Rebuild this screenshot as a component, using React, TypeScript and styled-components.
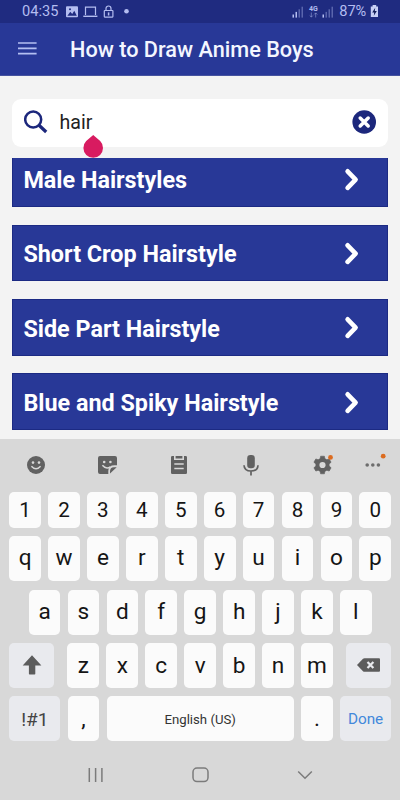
import React from "react";
import styled, { createGlobalStyle } from "styled-components";

const GlobalStyle = createGlobalStyle`
  * { box-sizing: border-box; }
  body { margin: 0; background: #f3f3f3; font-family: Roboto, "Liberation Sans", sans-serif; }
  svg { display: block; flex: none; }
`;

const Screen = styled.div`
  width: 400px;
  height: 800px;
  display: flex;
  flex-direction: column;
  overflow: hidden;
  background: #f3f3f3;
`;

const StatusBar = styled.div`
  height: 23px;
  flex: none;
  display: flex;
  align-items: center;
  justify-content: space-between;
  padding: 0 21px 0 22px;
  background: #1f2b80;
  color: #b4bdf0;
  font-size: 14.6px;
  line-height: 23px;
`;

const StatusGroup = styled.div`
  display: flex;
  align-items: center;
  height: 23px;
`;

const StatusText = styled.span<{ $width: number; $indent?: number }>`
  width: ${(p) => p.$width}px;
  padding-left: ${(p) => p.$indent ?? 0}px;
  white-space: nowrap;
`;

const NetworkType = styled.div`
  display: flex;
  flex-direction: column;
  align-items: center;
  width: 10px;
  margin: 0 4px 0 4px;
  font-size: 7px;
  line-height: 6px;
  font-weight: 700;
`;

const AppBar = styled.header`
  height: 52.5px;
  flex: none;
  display: flex;
  align-items: center;
  padding: 0 18px;
  background: #283897;
  border-bottom: 1px solid #46539f;
`;

const MenuButton = styled.div`
  width: 52px;
  padding-bottom: 1px;
`;

const Title = styled.h1`
  margin: 0;
  padding-top: 2px;
  font-size: 21.7px;
  font-weight: 500;
  line-height: 50px;
  color: #f3f6ff;
  white-space: nowrap;
`;

const Main = styled.main`
  flex: none;
  height: 363px;
  padding: 23px 12px 0;
  overflow: hidden;
`;

const SearchBox = styled.div`
  position: relative;
  display: flex;
  align-items: center;
  height: 48px;
  padding: 0 12px 1.6px;
  border-radius: 9px;
  background: #fff;
`;

const Query = styled.span`
  flex: 1;
  padding-left: 11.5px;
  font-size: 19.6px;
  font-weight: 400;
  line-height: 44px;
  padding-top: 3px;
  color: #222;
`;

const CursorHandle = styled.svg`
  position: absolute;
  left: 71px;
  top: 36.6px;
`;

const ListViewport = styled.div`
  margin-top: 11.2px;
  overflow: hidden;
`;

const List = styled.div`
  margin-top: -7.3px;
  display: grid;
  row-gap: 17.7px;
`;

const ListRow = styled.div`
  height: 56.6px;
  display: flex;
  align-items: center;
  justify-content: space-between;
  padding: 0 25.7px 0 10.4px;
  background: #283897;
  border: 1px solid #1c2a83;
  color: #fff;
  font-size: 23.35px;
  font-weight: 700;
  white-space: nowrap;
`;

const RowLabel = styled.span`
  padding-top: 3px;
  line-height: 28px;
`;

const Keyboard = styled.section`
  flex: 1;
  display: flex;
  flex-direction: column;
  background: #d8d8d8;
`;

const Toolbar = styled.div`
  height: 53.5px;
  flex: none;
  display: grid;
  grid-template-columns: repeat(5, 71.7px) 33.5px;
  align-items: center;
  justify-items: center;
`;

const Tool = styled.div`
  display: flex;
`;

const KeyRows = styled.div`
  display: grid;
  row-gap: 8.4px;
  padding: 0 8.8px 0 9.2px;
`;

const KeyRow = styled.div<{ $columns: string; $inset?: number; $short?: boolean }>`
  display: grid;
  grid-template-columns: ${(p) => p.$columns};
  column-gap: 7.2px;
  height: ${(p) => (p.$short ? 35.8 : 45)}px;
  padding: 0 ${(p) => p.$inset ?? 0}px;
`;

const LetterGroup = styled.div`
  display: grid;
  grid-template-columns: repeat(7, 1fr);
  column-gap: 7.2px;
  margin: 0 5.8px;
`;

const Key = styled.div<{ $size?: number; $special?: boolean; $color?: string; $shift?: number }>`
  display: flex;
  align-items: center;
  justify-content: center;
  border-radius: 5px;
  background: ${(p) => (p.$special ? "#e9eaee" : "#fbfbfb")};
  color: ${(p) => p.$color ?? "#151515"};
  font-size: ${(p) => p.$size ?? 22.6}px;
  line-height: 1;
  padding-top: ${(p) => p.$shift ?? 0}px;
  white-space: nowrap;
  min-width: 0;
`;

const NavBar = styled.nav`
  display: grid;
  grid-template-columns: repeat(3, 104.3px);
  justify-content: center;
  justify-items: center;
  align-items: center;
  height: 58px;
  padding: 10px 0 0 1px;
`;

const Signal = ({ lit }: { lit: number }) => (
  <svg width="12" height="12" viewBox="0 0 12 12">
    {[0, 1, 2, 3].map((i) => (
      <rect key={i} x={0.5 + i * 3} y={8.5 - i * 2.6} width="1.5" height={3.1 + i * 2.6} fill="#b4bdf0" opacity={i < lit ? 1 : 0.4} />
    ))}
  </svg>
);

const Chevron = () => (
  <svg width="18" height="26" viewBox="0 0 18 26">
    <path d="M4.6 5.3L12.6 13.6L4.6 21.9" fill="none" stroke="#fff" strokeWidth="4.6" strokeLinecap="round" strokeLinejoin="round" />
  </svg>
);

const styles = ["Male Hairstyles", "Short Crop Hairstyle", "Side Part Hairstyle", "Blue and Spiky Hairstyle"];

export default function App() {
  return (
    <Screen>
      <GlobalStyle />
      <StatusBar>
        <StatusGroup>
          <StatusText $width={44}>04:35</StatusText>
          <svg width="66" height="14" viewBox="0 0 66 14">
            <rect x="0" y="1.3" width="12" height="11" rx="1" fill="#b4bdf0" />
            <path d="M1.4 10.8 L4.3 6.8 L6.2 9 L8.3 5.8 L10.8 10.8Z" fill="#1f2b80" />
            <circle cx="4" cy="4.3" r="1" fill="#1f2b80" />
            <path d="M19.5 10 V2.2 H29.5 V10" fill="none" stroke="#b4bdf0" strokeWidth="1.2" />
            <path d="M17.3 11.3 H31.4" stroke="#b4bdf0" strokeWidth="1.4" />
            <path d="M40 5.5 V3.5 A2.5 2.5 0 0 1 45 3.5 V5.5" fill="none" stroke="#b4bdf0" strokeWidth="1.2" />
            <rect x="38.3" y="5.5" width="8.6" height="6.6" rx=".5" fill="none" stroke="#b4bdf0" strokeWidth="1.2" />
            <path d="M42.6 7.4 V10.5" stroke="#b4bdf0" strokeWidth="1.5" />
            <circle cx="60.5" cy="6.3" r="2.3" fill="#b4bdf0" />
          </svg>
        </StatusGroup>
        <StatusGroup>
          <Signal lit={2} />
          <NetworkType>
            <span>4G</span>
            <svg width="9" height="6" viewBox="0 0 9 6">
              <path d="M2.3 .5V5M.7 3.5L2.3 5.1L3.9 3.5M6.7 5.5V1M5.1 2.5L6.7 .9L8.3 2.5" fill="none" stroke="#b4bdf0" strokeWidth=".9" opacity=".55" />
            </svg>
          </NetworkType>
          <Signal lit={1} />
          <StatusText $width={35.6} $indent={4.8}>87%</StatusText>
          <svg width="9" height="13" viewBox="0 0 9 13">
            <path d="M2.6 0H6.2V1.4H8V12H.8V1.4H2.6Z" fill="#c8d0f6" />
            <path d="M5.2 2.8L2.2 7.4H4.2L3.8 10.8L6.8 6.1H4.8Z" fill="#111c58" />
          </svg>
        </StatusGroup>
      </StatusBar>
      <AppBar>
        <MenuButton>
          <svg width="19" height="13" viewBox="0 0 19 13">
            <path d="M0 1H18.6M0 6.4H18.6M0 11.7H18.6" stroke="#b4bff2" strokeWidth="1.7" />
          </svg>
        </MenuButton>
        <Title>How to Draw Anime Boys</Title>
      </AppBar>
      <Main>
        <SearchBox>
          <svg width="24" height="24" viewBox="0 0 24 24">
            <circle cx="9.2" cy="9.5" r="8" fill="none" stroke="#1c277c" strokeWidth="2.5" />
            <path d="M15 15.3L22.2 22" stroke="#1c277c" strokeWidth="3.3" />
          </svg>
          <Query>hair</Query>
          <svg width="24" height="24" viewBox="0 0 24 24">
            <circle cx="12.2" cy="12" r="11.8" fill="#1c277c" />
            <path d="M8.2 8L16.2 16M16.2 8L8.2 16" stroke="#fff" strokeWidth="3.5" strokeLinecap="round" />
          </svg>
          <CursorHandle width="21" height="23" viewBox="0 0 21 23">
            <path d="M10.2 0L17.2 6.1A9.8 9.8 0 1 1 3.2 6.1Z" fill="#d81b60" />
          </CursorHandle>
        </SearchBox>
        <ListViewport>
          <List>
            {styles.map((s) => (
              <ListRow key={s}>
                <RowLabel>{s}</RowLabel>
                <Chevron />
              </ListRow>
            ))}
          </List>
        </ListViewport>
      </Main>
      <Keyboard>
        <Toolbar>
          <Tool>
            <svg width="18" height="18" viewBox="0 0 18 18">
              <circle cx="9" cy="9" r="9" fill="#616161" />
              <circle cx="6" cy="6.6" r="1.3" fill="#d8d8d8" />
              <circle cx="12" cy="6.6" r="1.3" fill="#d8d8d8" />
              <path d="M4.4 10.3Q9 15.3 13.6 10.3" fill="none" stroke="#d8d8d8" strokeWidth="1.5" />
            </svg>
          </Tool>
          <Tool>
            <svg width="19" height="18" viewBox="0 0 19 18">
              <path d="M2 0H17Q19 0 19 2V9.3H16.5Q10.3 9.3 10.3 15V18H2Q0 18 0 16V2Q0 0 2 0Z" fill="#616161" />
              <path d="M12 17.6V15.5Q12 11.2 16 11.2H18.7Z" fill="#616161" />
              <circle cx="6.2" cy="6" r="1.3" fill="#d8d8d8" />
              <circle cx="12.4" cy="6" r="1.3" fill="#d8d8d8" />
              <path d="M4.4 9.3Q8.2 13.8 12.3 10.8" fill="none" stroke="#d8d8d8" strokeWidth="1.5" />
            </svg>
          </Tool>
          <Tool>
            <svg width="16" height="18" viewBox="0 0 16 18">
              <path d="M1.3 0H3V4H13V0H14.7Q16 0 16 1.3V16.7Q16 18 14.7 18H1.3Q0 18 0 16.7V1.3Q0 0 1.3 0Z" fill="#616161" />
              <rect x="4.6" y="0" width="6.8" height="2.5" fill="#616161" />
              <path d="M3.3 8H12.7M3.3 12.5H12.7" stroke="#d8d8d8" strokeWidth="1.6" />
            </svg>
          </Tool>
          <Tool>
            <svg width="16" height="21" viewBox="0 0 16 21">
              <rect x="4.2" y="0" width="7.6" height="13.2" rx="3.2" fill="#616161" />
              <path d="M1 10.2Q1.3 16 8 16Q14.7 16 15 10.2M8 16V20.5" fill="none" stroke="#616161" strokeWidth="1.7" />
            </svg>
          </Tool>
          <Tool>
            <svg width="20" height="20" viewBox="0 0 20 20">
              <g fill="#616161">
                <circle cx="9.5" cy="10" r="7" />
                {[0, 60, 120, 180, 240, 300].map((a) => (
                  <path key={a} d="M7 4.3L7.6 1.2H11.4L12 4.3Z" transform={`rotate(${a} 9.5 10)`} stroke="#616161" strokeWidth=".6" />
                ))}
              </g>
              <circle cx="9.5" cy="10" r="3.1" fill="#d8d8d8" />
              <circle cx="17.5" cy="2.4" r="2.4" fill="#dc6c20" />
            </svg>
          </Tool>
          <Tool>
            <svg width="21" height="24" viewBox="0 0 21 24">
              <g fill="#6d6d6d">
                <circle cx="2.2" cy="12" r="1.8" />
                <circle cx="7.8" cy="12" r="1.8" />
                <circle cx="13.4" cy="12" r="1.8" />
              </g>
              <circle cx="18.2" cy="3.2" r="2.4" fill="#dc6c20" />
            </svg>
          </Tool>
        </Toolbar>
        <KeyRows>
          <KeyRow $columns="repeat(10, 1fr)" $short>
            {[..."1234567890"].map((k) => <Key key={k} $size={20.6} $shift={1}>{k}</Key>)}
          </KeyRow>
          <KeyRow $columns="repeat(10, 1fr)">
            {[..."qwertyuiop"].map((k) => <Key key={k}>{k}</Key>)}
          </KeyRow>
          <KeyRow $columns="repeat(9, 1fr)" $inset={19.5}>
            {[..."asdfghjkl"].map((k) => <Key key={k}>{k}</Key>)}
          </KeyRow>
          <KeyRow $columns="45.3px 1fr 45.3px">
            <Key $special>
              <svg width="20" height="20" viewBox="0 0 20 20">
                <path d="M10 .3L19.4 10.5H13.3V18.7Q13.3 19.4 12.6 19.4H7.6Q6.9 19.4 6.9 18.7V10.5H.7Z" fill="#5c5c5c" />
              </svg>
            </Key>
            <LetterGroup>
              {[..."zxcvbnm"].map((k) => <Key key={k} $shift={1}>{k}</Key>)}
            </LetterGroup>
            <Key $special>
              <svg width="23" height="14" viewBox="0 0 23 14">
                <path d="M0 7L6 .8Q6.6 .2 7.5 .2H22Q23 .2 23 1.2V12.8Q23 13.8 22 13.8H7.5Q6.6 13.8 6 13.2Z" fill="#5c5c5c" />
                <path d="M10.5 3.9L16.4 10.1M16.4 3.9L10.5 10.1" stroke="#e9eaee" strokeWidth="2.2" />
              </svg>
            </Key>
          </KeyRow>
          <KeyRow $columns="51.3px 31.7px 1fr 31.7px 51.3px">
            <Key $special $size={19} $color="#444" $shift={1}>!#1</Key>
            <Key $shift={1}>,</Key>
            <Key $size={13.2} $color="#333" $shift={1}>English (US)</Key>
            <Key $shift={1}>.</Key>
            <Key $special $size={15.3} $color="#4288db" $shift={1}>Done</Key>
          </KeyRow>
        </KeyRows>
        <NavBar>
          <svg width="16" height="16" viewBox="0 0 16 16">
            <path d="M1.3 1V15M7.6 1V15M13.9 1V15" stroke="#7b7b7b" strokeWidth="1.5" />
          </svg>
          <svg width="17" height="16" viewBox="0 0 17 16">
            <rect x="1" y="1" width="15" height="13.6" rx="4" fill="none" stroke="#7b7b7b" strokeWidth="1.5" />
          </svg>
          <svg width="16" height="16" viewBox="0 0 16 16">
            <path d="M1.2 4.5L8 11.3L14.8 4.5" fill="none" stroke="#7b7b7b" strokeWidth="1.5" />
          </svg>
        </NavBar>
      </Keyboard>
    </Screen>
  );
}
